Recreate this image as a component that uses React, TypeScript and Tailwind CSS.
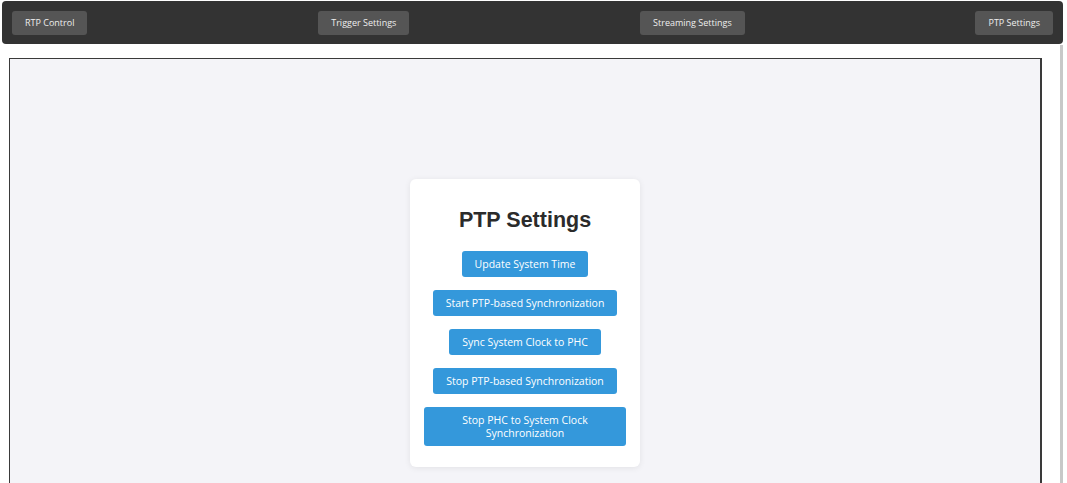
import React from 'react';

const navItems = ['RTP Control', 'Trigger Settings', 'Streaming Settings', 'PTP Settings'];

const actions = [
  'Update System Time',
  'Start PTP-based Synchronization',
  'Sync System Clock to PHC',
  'Stop PTP-based Synchronization',
  'Stop PHC to System Clock Synchronization',
];

const uiFont = { fontFamily: '"Open Sans", "Noto Sans", sans-serif' };

export default function App() {
  return (
    <div className="w-[1067px] h-[483px] overflow-hidden bg-white" style={uiFont}>
      {/* top navigation */}
      <nav className="mx-[2px] mt-[1px] w-[1061px] h-[43px] bg-[#333333] rounded-[4px] flex items-center justify-between px-[10px]">
        {navItems.map((item) => (
          <button
            key={item}
            className="h-[24px] px-[13px] rounded-[3px] bg-[#555555] text-[#eeeeee] text-[9px] leading-none"
          >
            {item}
          </button>
        ))}
      </nav>

      <div className="flex">
        <div className="ml-[9px] mt-[14px] w-[1033px] h-[530px] border border-[#3a3a3a] border-r-2 bg-[#f4f4f8] flex items-center justify-center">
          <div className="w-[230px] bg-white rounded-[6px] shadow-[0_1px_6px_rgba(0,0,0,0.08)] px-[14px] pt-[28px] pb-[21px] flex flex-col items-center">
            <h2
              className="text-[21.5px] font-bold text-[#2b2b2b] leading-[26px]"
              style={{ fontFamily: '"Liberation Sans", Arial, sans-serif' }}
            >
              PTP Settings
            </h2>
            <div className="mt-[18px] flex flex-col items-center gap-[13px] w-full">
              {actions.map((label) => (
                <button
                  key={label}
                  className="min-h-[26px] py-[6.5px] px-[13px] rounded-[3px] bg-[#3498db] text-white text-[10.5px] leading-[13px] text-center"
                >
                  {label}
                </button>
              ))}
            </div>
          </div>
        </div>
        {/* scrollbar track */}
        <div className="ml-[18px] mt-[1px] w-[3px] h-[440px] bg-[#c8c8c8]" />
      </div>
    </div>
  );
}
